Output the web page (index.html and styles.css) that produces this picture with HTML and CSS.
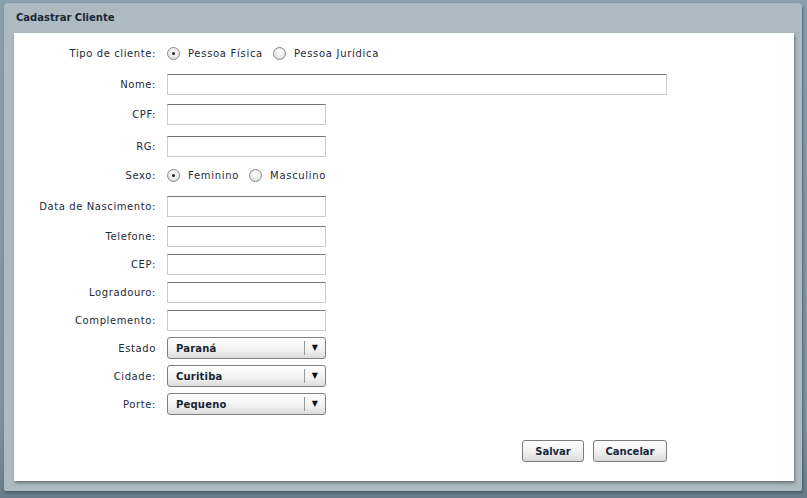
FILE: index.html
```html
<!DOCTYPE html>
<html lang="pt">
<head>
<meta charset="utf-8">
<title>Cadastrar Cliente</title>
<link rel="stylesheet" href="styles.css">
</head>
<body>
<div class="desk">
  <div class="window">
    <div class="titlebar">Cadastrar Cliente</div>
    <div class="content">
      <div class="form">
        <div class="row row-radio">
          <label class="lbl">Tipo de cliente:</label>
          <div class="field radios">
            <span class="radio checked"></span><span class="rtext">Pessoa Física</span>
            <span class="radio"></span><span class="rtext">Pessoa Jurídica</span>
          </div>
        </div>
        <div class="row gap10">
          <label class="lbl">Nome:</label>
          <div class="field"><span class="input wide"></span></div>
        </div>
        <div class="row gap8">
          <label class="lbl">CPF:</label>
          <div class="field"><span class="input"></span></div>
        </div>
        <div class="row gap10">
          <label class="lbl">RG:</label>
          <div class="field"><span class="input"></span></div>
        </div>
        <div class="row row-radio gap8">
          <label class="lbl">Sexo:</label>
          <div class="field radios">
            <span class="radio checked"></span><span class="rtext">Feminino</span>
            <span class="radio"></span><span class="rtext">Masculino</span>
          </div>
        </div>
        <div class="row gap10">
          <label class="lbl">Data de Nascimento:</label>
          <div class="field"><span class="input"></span></div>
        </div>
        <div class="row gap8">
          <label class="lbl">Telefone:</label>
          <div class="field"><span class="input"></span></div>
        </div>
        <div class="row gap6">
          <label class="lbl">CEP:</label>
          <div class="field"><span class="input"></span></div>
        </div>
        <div class="row gap6">
          <label class="lbl">Logradouro:</label>
          <div class="field"><span class="input"></span></div>
        </div>
        <div class="row gap6">
          <label class="lbl">Complemento:</label>
          <div class="field"><span class="input"></span></div>
        </div>
        <div class="row gap6">
          <label class="lbl">Estado</label>
          <div class="field"><span class="select"><span class="sval">Paraná</span><span class="sarrow">▼</span></span></div>
        </div>
        <div class="row gap6">
          <label class="lbl">Cidade:</label>
          <div class="field"><span class="select"><span class="sval">Curitiba</span><span class="sarrow">▼</span></span></div>
        </div>
        <div class="row gap6">
          <label class="lbl">Porte:</label>
          <div class="field"><span class="select"><span class="sval">Pequeno</span><span class="sarrow">▼</span></span></div>
        </div>
        <div class="actions">
          <button class="btn btn-save">Salvar</button>
          <button class="btn btn-cancel">Cancelar</button>
        </div>
      </div>
    </div>
  </div>
</div>
</body>
</html>
```
FILE: styles.css
```css
html, body {
  margin: 0;
  padding: 0;
}
body {
  width: 807px;
  height: 498px;
  overflow: hidden;
  font-family: "DejaVu Sans", Verdana, sans-serif;
  font-size: 10px;
  color: #1c2a3a;
}
.desk {
  width: 807px;
  height: 498px;
  background: linear-gradient(#8ba0ac, #7d919c 85%, #6a7e89);
  padding-top: 3px;
  box-sizing: border-box;
}
.window {
  margin-left: 4px;
  width: 798px;
  height: 488px;
  background: #adbac1;
  border-radius: 4px 4px 2px 2px;
  box-shadow: 1px 2px 3px rgba(40, 55, 65, 0.55);
  display: flex;
  flex-direction: column;
}
.titlebar {
  height: 30px;
  line-height: 29px;
  padding-left: 12px;
  font-weight: bold;
  font-size: 10px;
  color: #182838;
  flex: none;
}
.content {
  margin-left: 10px;
  width: 780px;
  height: 448px;
  background: #fff;
  box-shadow: 1px 2px 3px rgba(60, 70, 75, 0.6);
}
.form {
  padding-top: 10px;
  display: flex;
  flex-direction: column;
}
.row {
  display: flex;
  align-items: center;
  height: 22px;
}
.row-radio {
  height: 20px;
}
.gap6 { margin-top: 6px; }
.gap8 { margin-top: 8px; }
.gap10 { margin-top: 10px; }
.lbl {
  width: 142px;
  text-align: right;
  padding-right: 11px;
  flex: none;
  white-space: nowrap;
  letter-spacing: 0.6px;
}
.field {
  display: flex;
  align-items: center;
}
.radios {
  height: 20px;
}
.radio {
  width: 11px;
  height: 11px;
  border-radius: 50%;
  border: 1px solid #8a8a8a;
  background: radial-gradient(circle at 50% 35%, #ffffff, #e8e8e8 60%, #cfcfcf);
  position: relative;
  flex: none;
}
.radio.checked::after {
  content: "";
  position: absolute;
  left: 4px;
  top: 4px;
  width: 3px;
  height: 3px;
  border-radius: 50%;
  background: #222;
}
.rtext {
  margin-left: 8px;
  margin-right: 10px;
  letter-spacing: 0.7px;
}
.input {
  display: block;
  width: 157px;
  height: 19px;
  border: 1px solid #cccccc;
  border-top-color: #777777;
  background: #fff;
}
.input.wide {
  width: 498px;
}
.select {
  display: flex;
  align-items: center;
  width: 157px;
  height: 20px;
  border: 1px solid #7f7f7f;
  border-radius: 3px;
  background: linear-gradient(#ffffff, #f1f1f1 60%, #dcdcdc);
  font-weight: bold;
  color: #182434;
  letter-spacing: 0.2px;
}
.sval {
  flex: 1;
  padding-left: 8px;
}
.sarrow {
  width: 20px;
  height: 14px;
  line-height: 14px;
  border-left: 1px solid #9a9a9a;
  text-align: center;
  font-size: 8px;
  color: #111;
}
.actions {
  margin-top: 25px;
  width: 653px;
  display: flex;
  justify-content: flex-end;
  gap: 9px;
}
.btn {
  height: 22px;
  padding: 0;
  border: 1px solid #7b7b7b;
  border-radius: 3px;
  background: linear-gradient(#ffffff, #f0f0f0 55%, #d9d9d9);
  font-family: "DejaVu Sans", Verdana, sans-serif;
  font-size: 10px;
  font-weight: bold;
  color: #15283a;
}
.btn-save { width: 62px; }
.btn-cancel { width: 74px; }
```
